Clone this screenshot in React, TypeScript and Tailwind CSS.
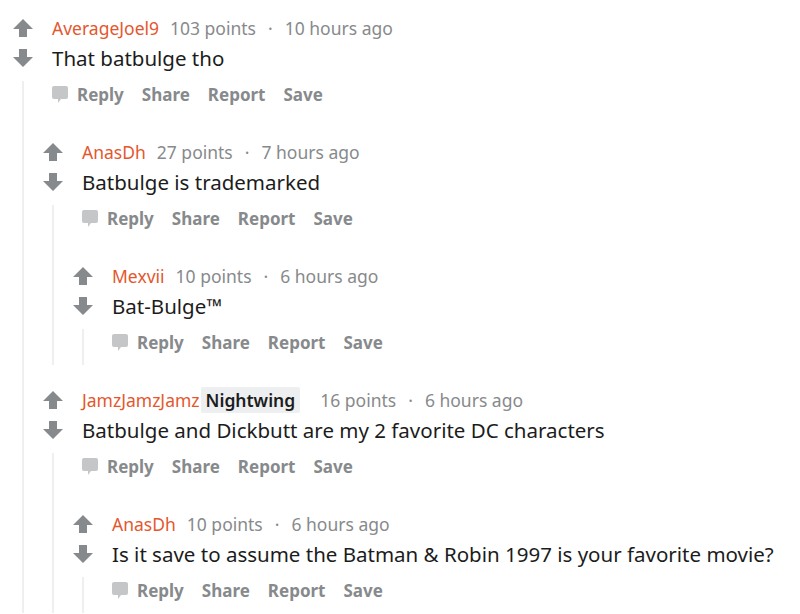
import type { ReactNode } from "react"

type CommentData = {
  user: string
  flair?: string
  points: string
  time: string
  body: string
  children?: CommentData[]
}

const thread: CommentData[] = [
  {
    user: "AverageJoel9",
    points: "103 points",
    time: "10 hours ago",
    body: "That batbulge tho",
    children: [
      {
        user: "AnasDh",
        points: "27 points",
        time: "7 hours ago",
        body: "Batbulge is trademarked",
        children: [
          { user: "Mexvii", points: "10 points", time: "6 hours ago", body: "Bat-Bulge™" },
        ],
      },
      {
        user: "JamzJamzJamz",
        flair: "Nightwing",
        points: "16 points",
        time: "6 hours ago",
        body: "Batbulge and Dickbutt are my 2 favorite DC characters",
        children: [
          {
            user: "AnasDh",
            points: "10 points",
            time: "6 hours ago",
            body: "Is it save to assume the Batman & Robin 1997 is your favorite movie?",
          },
        ],
      },
    ],
  },
]

function Arrow({ down }: { down?: boolean }) {
  return (
    <svg width="20" height="18" viewBox="0 0 20 18" className={down ? "rotate-180" : ""}>
      <path d="M10 0 L20 10 L14 10 L14 18 L6 18 L6 10 L0 10 Z" fill="#878a8c" />
    </svg>
  )
}

function Bubble() {
  return (
    <svg width="16" height="18" viewBox="0 0 16 18">
      <path d="M2 0 H14 A2 2 0 0 1 16 2 V11 A2 2 0 0 1 14 13 H9 L6 17 L6 13 H2 A2 2 0 0 1 0 11 V2 A2 2 0 0 1 2 0 Z" fill="#c4c6c8" />
    </svg>
  )
}

function Comment({ c }: { c: CommentData }) {
  const kids: ReactNode = c.children ? (
    <div className="pt-[23px] flex flex-col gap-[23px]">
      {c.children.map((k, i) => (
        <Comment key={i} c={k} />
      ))}
    </div>
  ) : null

  return (
    <div className="flex">
      <div className="w-[30px] shrink-0 flex flex-col items-center">
        <div className="h-[24px] flex items-center"><Arrow /></div>
        <div className="h-[28px] mt-[4px] flex items-center"><Arrow down /></div>
        <div className="flex-1 w-[2px] mt-[9px] bg-[#edeff1]" />
      </div>
      <div className="flex-1 min-w-0">
        <div className="pl-[14px] pb-[10px]">
          <div className="h-[24px] flex items-center text-[17.5px] text-[#878a8c] whitespace-nowrap">
            <span className="text-[#e4572e]">{c.user}</span>
            {c.flair && (
              <span className="ml-[1px] px-[5px] bg-[#edeff1] text-[#1c1c1c] font-semibold rounded-[2px]">{c.flair}</span>
            )}
            <span className={c.flair ? "ml-[20px]" : "ml-[11px]"}>{c.points}</span>
            <span className="mx-[12px]">·</span>
            <span>{c.time}</span>
          </div>
          <div className="h-[28px] mt-[4px] flex items-center text-[20.5px] text-[#1c1c1c] whitespace-nowrap">{c.body}</div>
          <div className="h-[24px] mt-[11px] flex items-center gap-[18px] text-[17px] font-bold text-[#878a8c]">
            <span className="flex items-center gap-[9px]"><Bubble />Reply</span>
            <span>Share</span>
            <span>Report</span>
            <span>Save</span>
          </div>
        </div>
        {kids}
      </div>
    </div>
  )
}

export default function App() {
  return (
    <div className="w-[800px] h-[614px] overflow-hidden bg-white pt-[16px] pl-[8px] font-['Noto_Sans',sans-serif]">
      {thread.map((c, i) => (
        <Comment key={i} c={c} />
      ))}
    </div>
  )
}
